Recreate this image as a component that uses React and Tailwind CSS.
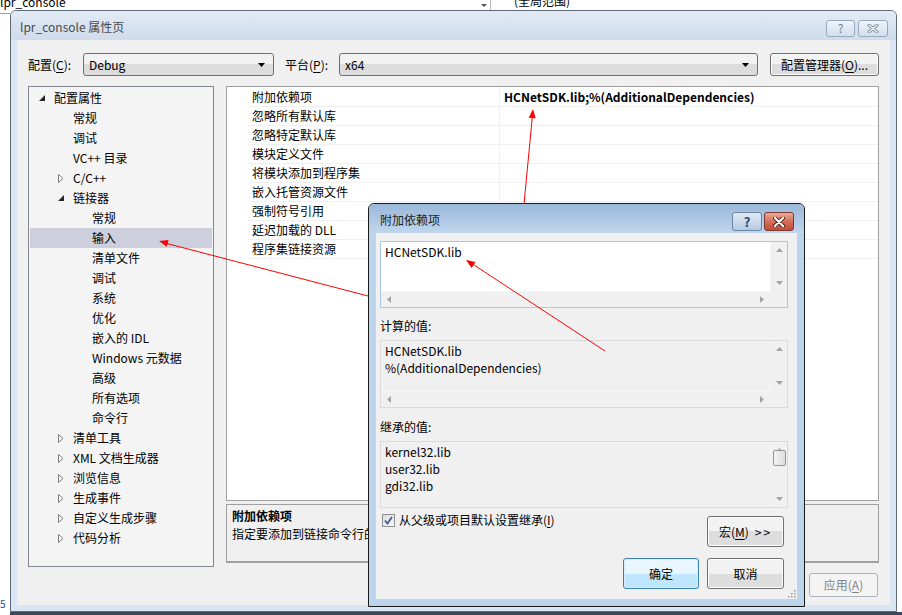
import React from "react";

const FONT = "font-['Noto_Sans_CJK_SC','Noto_Sans',sans-serif]";

const tree = [
    { t: "配置属性", l: 0, a: "open" },
    { t: "常规", l: 1 },
    { t: "调试", l: 1 },
    { t: "VC++ 目录", l: 1 },
    { t: "C/C++", l: 1, a: "closed" },
    { t: "链接器", l: 1, a: "open" },
    { t: "常规", l: 2 },
    { t: "输入", l: 2, sel: true },
    { t: "清单文件", l: 2 },
    { t: "调试", l: 2 },
    { t: "系统", l: 2 },
    { t: "优化", l: 2 },
    { t: "嵌入的 IDL", l: 2 },
    { t: "Windows 元数据", l: 2 },
    { t: "高级", l: 2 },
    { t: "所有选项", l: 2 },
    { t: "命令行", l: 2 },
    { t: "清单工具", l: 1, a: "closed" },
    { t: "XML 文档生成器", l: 1, a: "closed" },
    { t: "浏览信息", l: 1, a: "closed" },
    { t: "生成事件", l: 1, a: "closed" },
    { t: "自定义生成步骤", l: 1, a: "closed" },
    { t: "代码分析", l: 1, a: "closed" },
];

const props = [
    "附加依赖项",
    "忽略所有默认库",
    "忽略特定默认库",
    "模块定义文件",
    "将模块添加到程序集",
    "嵌入托管资源文件",
    "强制符号引用",
    "延迟加载的 DLL",
    "程序集链接资源",
];

function Arrow({ type }) {
    if (type === "open") {
        return (
            <svg width="7" height="7" viewBox="0 0 7 7">
                <polygon points="6,0 6,6 0,6" fill="#262626" />
            </svg>
        );
    }
    return (
        <svg width="6" height="9" viewBox="0 0 6 9">
            <polygon points="0.5,0.5 5,4.5 0.5,8.5" fill="white" stroke="#7a7a7a" strokeWidth="1" />
        </svg>
    );
}

function Combo({ value, className }) {
    return (
        <div className={`h-[23px] flex items-center justify-between rounded-[3px] border border-[#707070] bg-gradient-to-b from-[#f2f2f2] from-50% to-[#dcdcdc] to-50% pl-[5px] pr-[8px] ${className}`}>
            <span className="text-[12px]">{value}</span>
            <svg width="7" height="4" viewBox="0 0 7 4"><polygon points="0,0 7,0 3.5,4" fill="#000" /></svg>
        </div>
    );
}

function WinButton({ children, className = "", primary = false, disabled = false }) {
    const skin = primary
        ? "border-[#3c7fb1] bg-gradient-to-b from-[#eaf6fd] from-50% to-[#bee6fd] to-50% shadow-[inset_0_0_0_1px_#d4eefb]"
        : "border-[#707070] bg-gradient-to-b from-[#f2f2f2] from-50% to-[#dddddd] to-50% shadow-[inset_0_0_0_1px_#fcfcfc]";
    return (
        <div
            className={`flex items-center justify-center rounded-[3px] border text-[12px] ${disabled ? "border-[#adb2b5] bg-[#f4f4f4] text-[#838383]" : skin} ${className}`}
        >
            {children}
        </div>
    );
}

function U({ children }) {
    return <span className="underline underline-offset-2">{children}</span>;
}

function ScrollArrow({ dir }) {
    const pts = {
        up: "0,4 3.5,0 7,4",
        down: "0,0 7,0 3.5,4",
        left: "4,0 4,7 0,3.5",
        right: "0,0 0,7 4,3.5",
    }[dir];
    const vertical = dir === "up" || dir === "down";
    return (
        <svg width={vertical ? 7 : 4} height={vertical ? 4 : 7} viewBox={vertical ? "0 0 7 4" : "0 0 4 7"}>
            <polygon points={pts} fill="#a3a3a3" />
        </svg>
    );
}

function TextBox({ lines, border, bg, hbar = true, thumb = false, h }) {
    return (
        <div className={`border ${border} ${bg} flex ${h}`}>
            <div className="flex-1 flex flex-col min-w-0">
                <div className="flex-1 pl-[4px] pt-[1px] leading-[17px] text-[12px]">
                    {lines.map((l, i) => (
                        <div key={i}>{l}</div>
                    ))}
                </div>
                {hbar && (
                    <div className="h-[16px] bg-[#f0f0f0] border-t border-[#f6f6f6] flex items-center justify-between px-[6px]">
                        <ScrollArrow dir="left" />
                        <ScrollArrow dir="right" />
                    </div>
                )}
            </div>
            <div className="w-[17px] flex flex-col">
                <div className="flex-1 bg-[#f0f0f0] border-l border-[#f6f6f6] flex flex-col items-center justify-between py-[6px]">
                    <ScrollArrow dir="up" />
                    {thumb && (
                        <div className="w-[13px] h-[16px] -mt-[2px] rounded-[2px] border border-[#979797] bg-gradient-to-r from-[#f3f3f3] to-[#dedede]" />
                    )}
                    {thumb && <div className="flex-1" />}
                    <ScrollArrow dir="down" />
                </div>
                {hbar && <div className="h-[16px] bg-[#f0f0f0]" />}
            </div>
        </div>
    );
}

function CaptionButtons({ active }) {
    if (active) {
        return (
            <div className="flex gap-[2px]">
                <div className="w-[30px] h-[19px] rounded-[3px] border border-[#6d86a8] bg-gradient-to-b from-[#e1eaf5] to-[#b4c9e3] flex items-center justify-center text-[13px] font-bold text-[#2f4a6e] leading-none">?</div>
                <div className="w-[30px] h-[19px] rounded-[3px] border border-[#7f3b30] bg-gradient-to-b from-[#e9a897] via-[#d3705b] to-[#c24a37] flex items-center justify-center">
                    <svg width="12" height="10" viewBox="0 0 12 10">
                        <path d="M2 1 L10 9 M10 1 L2 9" stroke="#4b2019" strokeWidth="4" strokeLinecap="round" />
                        <path d="M2 1 L10 9 M10 1 L2 9" stroke="white" strokeWidth="2.2" strokeLinecap="round" />
                    </svg>
                </div>
            </div>
        );
    }
    return (
        <div className="flex gap-[3px]">
            <div className="w-[29px] h-[17px] rounded-[3px] border border-[#95a8c0] bg-gradient-to-b from-[#eef3f9] to-[#d3dfec] flex items-center justify-center text-[12px] text-[#6f7f93] leading-none">?</div>
            <div className="w-[30px] h-[17px] rounded-[3px] border border-[#95a8c0] bg-gradient-to-b from-[#eef3f9] to-[#d3dfec] flex items-center justify-center">
                <svg width="12" height="9" viewBox="0 0 12 9">
                    <path d="M2 1 L10 8 M10 1 L2 8" stroke="#7c8ca0" strokeWidth="3" strokeLinecap="round" />
                    <path d="M2 1 L10 8 M10 1 L2 8" stroke="#f4f7fa" strokeWidth="1.2" strokeLinecap="round" />
                </svg>
            </div>
        </div>
    );
}

function MainWindow() {
    return (
        <div className="absolute left-[10px] top-[10px] w-[887px] h-[602px] rounded-t-[6px] border border-[#5d6b7c] bg-[#dae6f3] flex flex-col overflow-hidden">
            {/* title bar */}
            <div className="h-[29px] shrink-0 flex items-center justify-between pl-[9px] pr-[8px] bg-gradient-to-b from-[#e2eaf4] to-[#cfdcec]">
                <span className="text-[12px] text-[#4a4a4a] mt-[3px]">lpr_console 属性页</span>
                <div className="mt-[5px]"><CaptionButtons /></div>
            </div>
            {/* client */}
            <div className="flex-1 mx-[6px] mb-[6px] bg-[#f0f0f0] flex flex-col pt-[13px] px-[11px] pb-[8px]">
                <div className="h-[23px] flex items-center">
                    <span className="w-[55px]">配置(<U>C</U>):</span>
                    <Combo value="Debug" className="w-[191px]" />
                    <span className="w-[54px] ml-[11px]">平台(<U>P</U>):</span>
                    <Combo value="x64" className="w-[419px]" />
                    <WinButton className="ml-[12px] w-[109px] h-[23px]">配置管理器(<U>O</U>)...</WinButton>
                </div>

                <div className="mt-[10px] h-[481px] flex gap-[12px]">
                    {/* tree */}
                    <div className="w-[186px] border border-[#828790] bg-[#f4f4f4] p-px">
                        {tree.map((n, i) => (
                            <div
                                key={i}
                                className={`h-[20px] flex items-center ${n.sel ? "bg-[#cdd0dc]" : ""}`}
                            >
                                <div style={{ width: 8 + n.l * 19 }} className="shrink-0" />
                                <div className="w-[16px] shrink-0 flex items-center pl-[1px]">
                                    {n.a && <Arrow type={n.a} />}
                                </div>
                                <span className="text-[12px] whitespace-nowrap -mt-[1px]">{n.t}</span>
                            </div>
                        ))}
                    </div>

                    {/* property grid + description */}
                    <div className="flex-1 flex flex-col">
                        <div className="h-[415px] border border-[#a0a0a0] bg-white pt-px">
                            {props.map((p, i) => (
                                <div key={i} className="h-[19px] flex">
                                    <div className="w-[21px] shrink-0" />
                                    <div className="flex-1 flex border-b border-[#f0f0f0]">
                                        <div className="w-[252px] shrink-0 pl-[4px] border-r border-[#f0f0f0] leading-[17px] whitespace-nowrap">{p}</div>
                                        <div className="flex-1 pl-[4px] leading-[17px] font-bold whitespace-nowrap">
                                            {i === 0 ? "HCNetSDK.lib;%(AdditionalDependencies)" : ""}
                                        </div>
                                    </div>
                                </div>
                            ))}
                        </div>
                        <div className="mt-[3px] h-[59px] border border-[#a0a0a0] border-b-2 bg-[#f0f0f0] pl-[5px] pt-[2px] leading-[18px]">
                            <div className="font-bold">附加依赖项</div>
                            <div className="w-[137px] overflow-hidden whitespace-nowrap">指定要添加到链接命令行的附加项</div>
                        </div>
                    </div>
                </div>

                <div className="mt-[6px] flex justify-end">
                    <WinButton disabled className="w-[69px] h-[24px] mr-px">应用(<U>A</U>)</WinButton>
                </div>
            </div>
        </div>
    );
}

function Dialog() {
    return (
        <div className="absolute left-[368px] top-[203px] w-[437px] h-[404px] rounded-t-[6px] border border-[#1a1a1a] bg-[#bcd4ec] flex flex-col overflow-hidden">
            <div className="h-[29px] shrink-0 flex items-center justify-between pl-[11px] pr-[10px] bg-gradient-to-b from-[#9ab8da] to-[#c1d6ed]">
                <span className="text-[12px] text-[#1e1e1e] mt-[2px]">附加依赖项</span>
                <div className="mt-[6px]"><CaptionButtons active /></div>
            </div>
            <div className="flex-1 mx-[7px] mb-[7px] bg-[#f0f0f0] flex flex-col pl-[4px] pr-[9px] pt-[8px] relative">
                <TextBox
                    h="h-[67px]"
                    border="border-[#a9c9e8]"
                    bg="bg-white"
                    lines={["HCNetSDK.lib"]}
                />
                <div className="mt-[9px] h-[18px] leading-[17px]">计算的值:</div>
                <div className="mt-[5px]">
                    <TextBox
                        h="h-[68px]"
                        border="border-[#d9d9d9]"
                        bg="bg-[#f0f0f0]"
                        lines={["HCNetSDK.lib", "%(AdditionalDependencies)"]}
                    />
                </div>
                <div className="mt-[10px] h-[18px] leading-[17px]">继承的值:</div>
                <div className="mt-[5px]">
                    <TextBox
                        h="h-[67px]"
                        border="border-[#d9d9d9]"
                        bg="bg-[#f0f0f0]"
                        hbar={false}
                        thumb
                        lines={["kernel32.lib", "user32.lib", "gdi32.lib"]}
                    />
                </div>

                <div className="mt-[8px] flex justify-between items-start">
                    <div className="flex items-center gap-[4px] ml-[2px] -mt-[4px] h-[16px]">
                        <div className="w-[13px] h-[13px] border border-[#8e8f8f] bg-gradient-to-br from-[#dcdcdc] to-[#fbfbfb] flex items-center justify-center">
                            <svg width="9" height="9" viewBox="0 0 9 9">
                                <path d="M1 4.5 L3.5 7.5 L8 1" stroke="#3e5a9a" strokeWidth="1.8" fill="none" />
                            </svg>
                        </div>
                        <span className="whitespace-nowrap">从父级或项目默认设置继承(<U>I</U>)</span>
                    </div>
                    <WinButton className="w-[77px] h-[31px] mr-[4px]">
                        宏(<U>M</U>)<span className="ml-[6px] tracking-[2px]">&gt;&gt;</span>
                    </WinButton>
                </div>

                <div className="mt-[11px] flex justify-end gap-[8px] mr-[4px]">
                    <WinButton primary className="w-[76px] h-[31px]">确定</WinButton>
                    <WinButton className="w-[77px] h-[31px]">取消</WinButton>
                </div>

                <svg className="absolute right-[1px] bottom-[1px]" width="10" height="10" viewBox="0 0 10 10">
                    {[[8, 2], [8, 5], [5, 5], [8, 8], [5, 8], [2, 8]].map(([x, y], i) => (
                        <rect key={i} x={x} y={y} width="1.5" height="1.5" fill="#9a9a9a" />
                    ))}
                </svg>
            </div>
        </div>
    );
}

export default function App() {
    return (
        <div className={`relative w-[902px] h-[615px] overflow-hidden bg-white text-[12px] text-black ${FONT}`}>
            {/* background application behind the dialogs */}
            <div className="absolute left-0 top-[-6px] text-[12px] leading-[16px]">lpr_console</div>
            <div className="absolute left-0 top-[13px] w-[10px] border-t border-[#a0a0a0]" />
            <svg className="absolute left-[481px] top-[4px]" width="6" height="3" viewBox="0 0 6 3"><polygon points="0,0 6,0 3,3" fill="#555" /></svg>
            <div className="absolute left-[490px] top-0 h-[10px] border-l border-[#bdbdbd]" />
            <div className="absolute left-[514px] top-[-7px] text-[12px] leading-[16px]">(全局范围)</div>
            <div className="absolute left-0 top-[598px] text-[10px] leading-[12px] text-[#1d3f8f]">5</div>
            <div className="absolute left-[10px] top-[612px] right-0 h-[3px] bg-[#3a4759]" />

            <MainWindow />
            <Dialog />

            {/* red annotation arrows */}
            <svg className="absolute inset-0 pointer-events-none" width="902" height="615">
                <line x1="524" y1="204" x2="532.5" y2="115" stroke="#ff0000" strokeWidth="1" />
                <polygon points="533,109 535.7,118.3 528.7,117.7" fill="#ff0000" />
                <line x1="605" y1="351" x2="471" y2="263" stroke="#ff0000" strokeWidth="1" />
                <polygon points="466,260 475.4,262 471.6,267.9" fill="#ff0000" />
                <line x1="368" y1="296" x2="165" y2="243" stroke="#ff0000" strokeWidth="1" />
                <polygon points="159,241 168.6,239.9 166.8,246.7" fill="#ff0000" />
            </svg>
        </div>
    );
}
